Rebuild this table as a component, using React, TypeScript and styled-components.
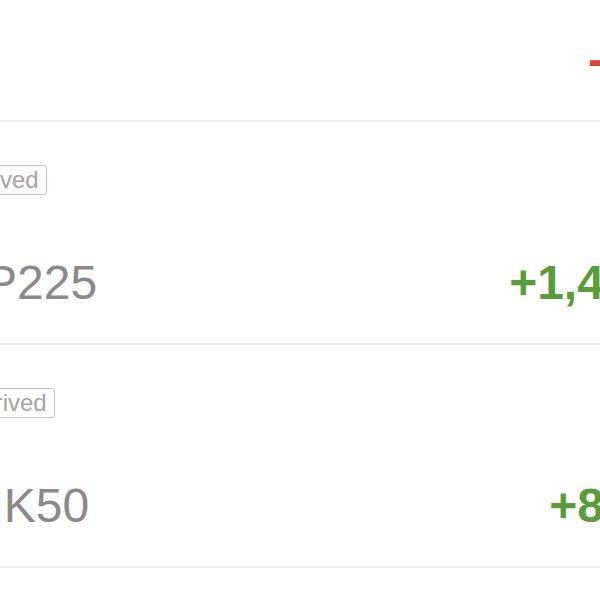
import React from "react";
import styled, { createGlobalStyle } from "styled-components";

const GlobalStyle = createGlobalStyle`
  html, body { margin: 0; padding: 0; background: #ffffff; }
  body { font-family: "Liberation Sans", Arial, Helvetica, sans-serif; }
`;

const Viewport = styled.div`
  width: 600px;
  height: 600px;
  overflow: hidden;
  background: #ffffff;
`;

const List = styled.div`
  display: flex;
  flex-direction: column;
  width: 924px;
  margin: -101px 0 0 -200px;
`;

const Row = styled.div<{ $indent: number }>`
  display: flex;
  flex-direction: column;
  align-items: flex-start;
  gap: 64px;
  padding: 43px 0 36px ${(p) => p.$indent}px;
  border-bottom: 2px solid #eeeeee;
`;

const Badge = styled.span`
  box-sizing: border-box;
  height: 30px;
  margin-left: -13px;
  padding: 0 7px;
  border: 1.5px solid #c4c4c4;
  border-radius: 3px;
  font-size: 24px;
  line-height: 27px;
  color: #a4a4a4;
`;

const MainLine = styled.div`
  align-self: stretch;
  display: flex;
  justify-content: space-between;
  align-items: baseline;
  height: 48px;
  line-height: 48px;
  font-size: 48px;
`;

const Name = styled.span`
  font-weight: 400;
  color: #8a8a8a;
`;

const Value = styled.span<{ $up: boolean }>`
  font-weight: 700;
  color: ${(p) => (p.$up ? "#5a9c3b" : "#d8433b")};
`;

const rows = [
  { name: "US30", value: "-56.20", up: false, indent: 0 },
  { name: "JP225", value: "+1,482.50", up: true, indent: 161 },
  { name: "HK50", value: "+812.30", up: true, indent: 169 },
];

export default function App() {
  return (
    <>
      <GlobalStyle />
      <Viewport>
        <List>
          {rows.map((r) => (
            <Row key={r.name} $indent={r.indent}>
              <Badge>Derived</Badge>
              <MainLine>
                <Name>{r.name}</Name>
                <Value $up={r.up}>{r.value}</Value>
              </MainLine>
            </Row>
          ))}
        </List>
      </Viewport>
    </>
  );
}
